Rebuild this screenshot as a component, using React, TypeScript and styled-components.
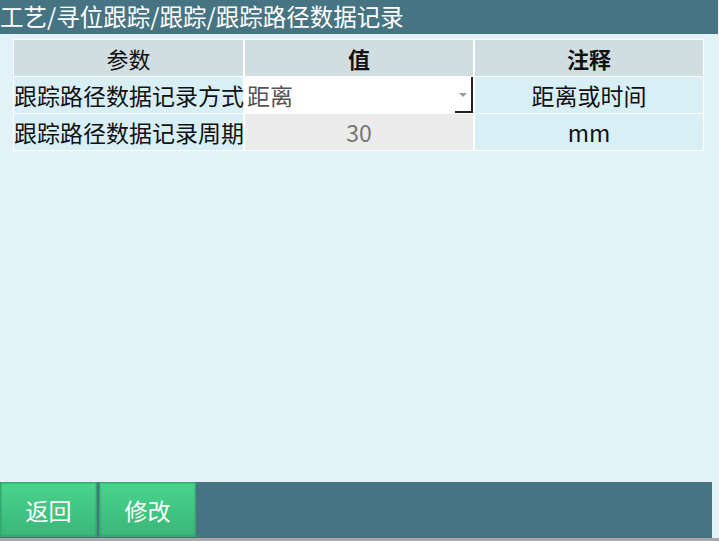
import React from 'react'
import styled, { createGlobalStyle } from 'styled-components'

const GlobalStyle = createGlobalStyle`
  html, body {
    margin: 0;
    padding: 0;
    background: #e3f2f8;
  }
  * { box-sizing: border-box; }
`

const Screen = styled.div`
  width: 719px;
  height: 541px;
  display: flex;
  flex-direction: column;
  background: #e3f2f8;
  font-family: "Noto Sans CJK SC", "Noto Sans", sans-serif;
  overflow: hidden;
`

const TitleBar = styled.header`
  height: 34px;
  margin-right: 1px;
  background: #477482;
  color: #ffffff;
  font-size: 23.5px;
  line-height: 33px;
  white-space: nowrap;
`

const Content = styled.main`
  flex: 1;
  padding: 5px 0 0 13px;
`

const Table = styled.div`
  width: 691px;
  display: grid;
  grid-template-columns: 229px 228px 228px;
  grid-auto-rows: 36px;
  gap: 1px 2px;
  padding: 1px;
  background: #ffffff;
`

const Cell = styled.div<{ $tone: 'head' | 'param' | 'input' | 'readonly'; $bold?: boolean; $align?: string }>`
  position: relative;
  display: flex;
  align-items: center;
  justify-content: ${p => p.$align || 'center'};
  font-size: ${p => (p.$tone === 'head' ? '22px' : '23px')};
  font-weight: ${p => (p.$bold ? 700 : 400)};
  white-space: nowrap;
  color: ${p => (p.$tone === 'input' ? '#555555' : p.$tone === 'readonly' ? '#777777' : '#111111')};
  background: ${p =>
    p.$tone === 'head' ? '#d0dde1' : p.$tone === 'input' ? '#ffffff' : p.$tone === 'readonly' ? '#ececec' : '#d9eff6'};
  padding: ${p => (p.$tone === 'input' ? '0 0 0 2px' : '0')};
`

const Select = styled(Cell)`
  &::after {
    content: '';
    position: absolute;
    right: 0;
    top: 0;
    bottom: 0;
    width: 16px;
    border-right: 2px solid #222222;
    border-bottom: 2px solid #222222;
  }
`

const Arrow = styled.span`
  position: absolute;
  right: 6px;
  top: 16px;
  width: 0;
  height: 0;
  border-left: 4px solid transparent;
  border-right: 4px solid transparent;
  border-top: 4px solid #9a9a9a;
`

const Footer = styled.footer`
  height: 56px;
  margin-right: 7px;
  background: #477482;
  display: flex;
  gap: 2px;
`

const Button = styled.button`
  width: 97px;
  height: 55px;
  border: 1px solid #34a86c;
  background: linear-gradient(#48d58d, #3cb679);
  box-shadow: inset 0 0 2px rgba(20, 110, 60, 0.5);
  color: #ffffff;
  font-family: inherit;
  font-size: 23px;
  padding: 0;
  cursor: pointer;
`

const BottomEdge = styled.div`
  height: 3px;
  background: #a9a9a9;
`

export default function App() {
  return (
    <>
      <GlobalStyle />
      <Screen>
        <TitleBar>工艺/寻位跟踪/跟踪/跟踪路径数据记录</TitleBar>
        <Content>
          <Table>
            <Cell $tone="head">参数</Cell>
            <Cell $tone="head" $bold>值</Cell>
            <Cell $tone="head" $bold>注释</Cell>

            <Cell $tone="param" $align="flex-start">跟踪路径数据记录方式</Cell>
            <Select $tone="input" $align="flex-start">
              距离
              <Arrow />
            </Select>
            <Cell $tone="param">距离或时间</Cell>

            <Cell $tone="param" $align="flex-start">跟踪路径数据记录周期</Cell>
            <Cell $tone="readonly">30</Cell>
            <Cell $tone="param">mm</Cell>
          </Table>
        </Content>
        <Footer>
          <Button>返回</Button>
          <Button>修改</Button>
        </Footer>
        <BottomEdge />
      </Screen>
    </>
  )
}
